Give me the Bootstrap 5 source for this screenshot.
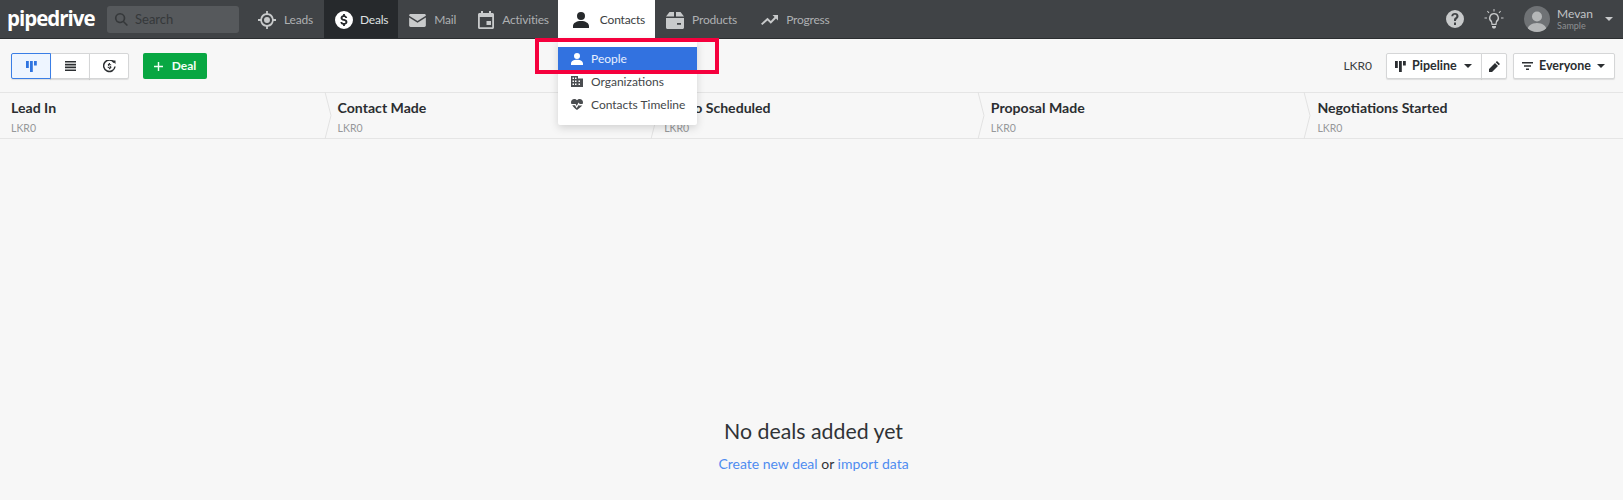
<!DOCTYPE html>
<html lang="en">
<head>
    <meta charset="UTF-8">
    <meta name="viewport" content="width=device-width, initial-scale=1.0">
    <title>Pipedrive - Deals</title>
    <link href="https://cdn.jsdelivr.net/npm/bootstrap@5.3.0/dist/css/bootstrap.min.css" rel="stylesheet">
    <style>
        html, body { height: 500px; overflow: hidden; }
        body { background: #f7f7f7; color: #26292c; font-family: "Lato", "Liberation Sans", sans-serif; font-size: 14px; }
        svg { display: block; fill: currentColor; flex: none; }

        .pd-top { height: 39px; background: #404346; border-bottom: 1px solid #2b2e30; padding: 0; color: #c2c4c6; flex-wrap: nowrap; justify-content: flex-start; }
        .pd-logo { width: 107px; padding-left: 7px; color: #fff; font-family: "Open Sans", sans-serif; font-weight: 700; font-size: 20.5px; letter-spacing: -1px; line-height: 38px; margin-top: -2px; }
        .pd-search { width: 132px; height: 27px; background: #56595c; border-radius: 3px; color: #35383a; padding: 1px 0 0 7px; gap: 6px; font-size: 13px; margin-right: 8px; }
        .pd-link { height: 38px; padding: 2px 11px 0; gap: 8px; color: #aeb0b2; font-size: 12px; letter-spacing: -.2px; text-decoration: none; }
        .pd-link svg { color: #c8cacb; }
        .pd-link:hover { color: #fff; }
        .pd-link.is-deals { background: #26292c; color: #dfe0e1; padding-right: 10px; gap: 7px; }
        .pd-link.is-deals svg { color: #fff; }
        .pd-link.is-activities { padding-right: 9px; }
        .pd-link.is-open { background: #fff; color: #3b3e41; height: 39px; padding: 2px 10px 0 15px; gap: 11px; }
        .pd-link.is-open svg { color: #26292c; }
        .pd-link.is-products { padding-right: 13px; }
        .pd-right { gap: 20px; margin-left: auto; color: #c8cacb; }
        .pd-user { line-height: 1.15; font-size: 12px; margin-left: -13px; color: #c2c4c6; }
        .pd-user small { display: block; font-size: 9px; color: #8e9092; }
        .pd-avatar { width: 26px; height: 26px; border-radius: 50%; overflow: hidden; background: #6f7275; color: #b5b7b8; }
        .pd-caret { width: 0; height: 0; border: 4.500px solid transparent; border-top-color: currentColor; border-bottom: 0; }
        .pd-right .pd-caret { margin: 0 10px 0 -8px; }

        .pd-bar { height: 53px; padding: 14px 8px 13px 11px; }
        .pd-btn { height: 26px; padding: 0 8px; background: #fff; border: 1px solid #d5d6d7; border-radius: 2px; box-shadow: 0 1px 1px rgba(0,0,0,.1); color: #2b2e31; font-weight: 700; font-size: 12.5px; gap: 6px; --bs-btn-hover-bg: #fff; --bs-btn-hover-border-color: #d5d6d7; }
        .pd-view { width: 40px; padding: 0; justify-content: center; }
        .pd-view.is-on { background: #eef5ff; border-color: #3a7ee6; color: #2f74e0; position: relative; z-index: 1; }
        .pd-add { height: 26px; width: 64px; margin-left: 14px; padding: 0; background: #08a742; border: 0; border-radius: 2px; color: #f2fff6; font-size: 12px; font-weight: 700; gap: 9px; --bs-btn-hover-bg: #08a742; --bs-btn-hover-color: #fff; }
        .pd-total { font-size: 12px; color: #3b3e41; margin-right: 14px; }
        .pd-pipe { width: 96px; }
        .pd-edit { width: 26px; justify-content: center; padding: 0; }
        .pd-everyone { width: 102px; margin-left: 6px; }
        .pd-btn .pd-caret { margin-left: auto; margin-right: 1px; }

        .pd-stages { height: 47px; border-top: 1px solid #e5e5e5; border-bottom: 1px solid #e5e5e5; }
        .pd-stage { width: 326.6px; padding: 5px 0 0 11px; position: relative; flex: none; }
        .pd-stage:last-child { flex: 1 1 auto; width: auto; }
        .pd-stage h6 { font-size: 14.100px; font-weight: 700; line-height: 20px; margin: 0 0 3px; color: #2b2e31; }
        .pd-stage span { font-size: 10.500px; color: #96989a; display: block; line-height: 14px; }
        .pd-chev { position: absolute; top: -1px; right: -5px; color: #e2e2e2; fill: none; }

        .pd-empty { flex: 1 1 auto; padding: 0 0 26px 4px; }
        .pd-empty h4 { font-size: 21.300px; font-weight: 400; margin: 0 0 8px; line-height: 30px; color: #303336; }
        .pd-empty p { margin: 0; font-size: 14px; line-height: 20px; color: #303336; }
        .pd-empty a { color: #4f8cf0; text-decoration: none; }

        .pd-menu { display: block; left: 558px; top: 39px; width: 139px; min-width: 0; margin: 0; padding: 8px 0 5px; height: 86px; border: 0; border-radius: 0 0 2px 2px; box-shadow: 0 3px 8px rgba(0,0,0,.15); font-size: 12px; }
        .pd-menu .dropdown-item { height: 23px; padding: 0 0 0 13px; gap: 8px; color: #44474a; }
        .pd-menu .dropdown-item svg { color: #4a4d50; }
        .pd-menu .dropdown-item.active { background: #3272e0; color: #e8f0ff; }
        .pd-menu .dropdown-item.active svg { color: #fff; }
        .pd-mark { position: absolute; left: 535px; top: 38px; width: 184px; height: 36px; border: 4px solid #f5003d; pointer-events: none; z-index: 1100; }
    </style>
</head>
<body class="d-flex flex-column">

<nav class="navbar pd-top">
    <div class="pd-logo">pipedrive</div>
    <div class="pd-search d-flex align-items-center">
        <svg width="15" height="15" viewBox="0 0 16 16"><path d="M6.500 1a5.500 5.500 0 0 1 4.400 8.800l4 4-1.200 1.200-4-4A5.500 5.500 0 1 1 6.500 1zm0 1.700a3.800 3.800 0 1 0 0 7.600 3.800 3.800 0 0 0 0-7.600z"/></svg>
        Search
    </div>
    <a href="#" class="pd-link d-flex align-items-center">
        <svg width="18" height="18" viewBox="0 0 20 20"><path d="M9 0h2v2.600a7.500 7.500 0 0 1 6.400 6.400H20v2h-2.600a7.500 7.500 0 0 1-6.400 6.400V20H9v-2.600A7.500 7.500 0 0 1 2.600 11H0V9h2.600A7.500 7.500 0 0 1 9 2.600V0zm1 4.400a5.600 5.600 0 1 0 0 11.200 5.600 5.600 0 0 0 0-11.200zM10 6.700a3.300 3.300 0 1 1 0 6.600 3.300 3.300 0 0 1 0-6.600z"/></svg>
        Leads
    </a>
    <a href="#" class="pd-link is-deals d-flex align-items-center">
        <svg width="18" height="18" viewBox="0 0 18 18"><path fill-rule="evenodd" d="M9 0a9 9 0 1 1 0 18A9 9 0 0 1 9 0zm-.9 3v1.300C6.600 4.600 5.600 5.600 5.600 7c0 1.700 1.300 2.300 3 2.800 1.400.4 1.900.7 1.900 1.300 0 .6-.6 1-1.500 1-1 0-1.600-.4-1.700-1.200H5.400c.1 1.600 1.200 2.500 2.700 2.800V15h1.800v-1.300c1.500-.3 2.500-1.200 2.500-2.700 0-1.800-1.400-2.400-3-2.900-1.400-.4-1.900-.7-1.900-1.200 0-.5.5-.9 1.400-.9.900 0 1.400.4 1.500 1.100h1.800c-.1-1.400-1-2.400-2.300-2.700V3H8.100z"/></svg>
        Deals
    </a>
    <a href="#" class="pd-link d-flex align-items-center">
        <svg width="17" height="13" viewBox="0 0 18 14"><path d="M1.500 0h15c.8 0 1.500.7 1.500 1.500v.4L9 7.500 0 1.900v-.4C0 .7.700 0 1.500 0zM0 3.900l9 5.600 9-5.600v8.600c0 .8-.7 1.500-1.500 1.500h-15C.7 14 0 13.300 0 12.500V3.900z"/></svg>
        Mail
    </a>
    <a href="#" class="pd-link is-activities d-flex align-items-center">
        <svg width="16" height="18" viewBox="0 0 16 18"><path fill-rule="evenodd" d="M3 0h2v2h6V0h2v2h1.500C15.300 2 16 2.700 16 3.500v13c0 .8-.7 1.500-1.500 1.500h-13C.7 18 0 17.300 0 16.500v-13C0 2.700.7 2 1.500 2H3V0zM1.800 6v10.200h12.400V6H1.800zM8.500 10H13v4H8.500v-4z"/></svg>
        Activities
    </a>
    <a href="#" class="pd-link is-open d-flex align-items-center">
        <svg width="16" height="16" viewBox="0 0 16 16"><path d="M8 0a4 4 0 1 1 0 8 4 4 0 0 1 0-8zM0 14c0-3 3.500-5 8-5s8 2 8 5v2H0v-2z"/></svg>
        Contacts
    </a>
    <a href="#" class="pd-link is-products d-flex align-items-center">
        <svg width="18" height="17" viewBox="0 0 18 17"><path d="M3.500 0H8v4.500H0L3.500 0zM10 0h4.500L18 4.500h-8V0zM0 6h18v9.500c0 .8-.7 1.500-1.500 1.500h-15C.7 17 0 16.300 0 15.500V6zm11 5v1.800h4V11h-4z"/></svg>
        Products
    </a>
    <a href="#" class="pd-link d-flex align-items-center">
        <svg width="17" height="10" viewBox="0 0 17 10"><path d="M11.500 0H17v5.500l-2-2-5.200 5.200-3.300-3.300L1.300 10 0 8.700l6.500-6 3.300 3.300 3.800-3.900-2.100-2.100z"/></svg>
        Progress
    </a>
    <div class="pd-right d-flex align-items-center">
        <svg width="18" height="18" viewBox="0 0 18 18"><path fill-rule="evenodd" d="M9 0a9 9 0 1 1 0 18A9 9 0 0 1 9 0zM8 12.500V15h2v-2.500H8zM9 3C6.900 3 5.500 4.200 5.300 6.200h2c.1-.9.700-1.400 1.600-1.400.9 0 1.500.5 1.500 1.300 0 .7-.4 1-1.100 1.500C8.400 8.200 8 8.900 8 10.200v.8h2v-.6c0-.7.300-1 1-1.500.9-.7 1.500-1.400 1.500-2.800C12.500 4.200 11.100 3 9 3z"/></svg>
        <svg width="20" height="20" viewBox="0 0 20 20"><path d="M9.500 0h1v2.500h-1zM3 2.500l.7-.7 1.700 1.700-.7.7zM16.300 1.800l.7.7-1.700 1.700-.7-.7zM.5 8.500H3v1H.5zM17 8.500h2.500v1H17zM10 4a5 5 0 0 1 3 9l-.5 3h-5L7 13a5 5 0 0 1 3-9zm0 1.300a3.700 3.700 0 0 0-2 6.800l.6 2.600h2.800l.6-2.600a3.700 3.700 0 0 0-2-6.800zM8 17h4v1.200l-1 1.300H9l-1-1.300V17z"/></svg>
        <div class="pd-avatar">
            <svg width="26" height="26" viewBox="0 0 26 26"><circle cx="13" cy="10.500" r="5"/><path d="M3 26c0-6 4.500-9 10-9s10 3 10 9z"/></svg>
        </div>
        <div class="pd-user">Mevan<small>Sample</small></div>
        <div class="pd-caret"></div>
    </div>
</nav>

<div class="pd-bar d-flex align-items-center">
    <div class="btn-group">
        <button class="btn pd-btn pd-view is-on d-flex align-items-center">
            <svg width="11" height="11" viewBox="0 0 11 11"><path d="M0 0h2.800v7H0zM4 0h2.800v11H4zM8 0h2.800v4.500H8z"/></svg>
        </button>
        <button class="btn pd-btn pd-view d-flex align-items-center">
            <svg width="11" height="10" viewBox="0 0 11 10"><path d="M0 0h11v1.600H0zM0 2.800h11v1.600H0zM0 5.600h11v1.600H0zM0 8.400h11V10H0z"/></svg>
        </button>
        <button class="btn pd-btn pd-view d-flex align-items-center">
            <svg width="13" height="13" viewBox="0 0 13 13"><path fill="none" stroke="currentColor" stroke-width="1.500" d="M11 2.500A5.700 5.700 0 1 0 12 6.500"/><path d="M9 .5h3.500V4zM6 3h1v.9c.8.1 1.300.6 1.400 1.300H7.300c-.1-.3-.3-.5-.8-.5-.4 0-.7.200-.7.500 0 .3.300.4 1 .6 1 .3 1.600.6 1.600 1.500 0 .7-.5 1.200-1.400 1.400V9.200H6v-.9c-.9-.1-1.500-.7-1.500-1.500h1.100c.1.400.4.600.9.600.5 0 .8-.2.800-.6 0-.3-.3-.5-1-.6-1-.3-1.500-.7-1.500-1.500 0-.7.500-1.200 1.200-1.300V3z"/></svg>
        </button>
    </div>
    <button class="btn pd-add d-flex align-items-center justify-content-center">
        <svg width="9" height="9" viewBox="0 0 10 10"><path d="M4.200 0h1.600v4.200H10v1.600H5.800V10H4.200V5.800H0V4.200h4.200z"/></svg>
        Deal
    </button>
    <div class="ms-auto d-flex align-items-center">
        <span class="pd-total">LKR0</span>
        <div class="btn-group">
            <button class="btn pd-btn pd-pipe d-flex align-items-center">
                <svg width="11" height="11" viewBox="0 0 11 11"><path d="M0 0h2.800v7H0zM4 0h2.800v11H4zM8 0h2.800v4.500H8z"/></svg>
                Pipeline
                <span class="pd-caret"></span>
            </button>
            <button class="btn pd-btn pd-edit d-flex align-items-center">
                <svg width="11" height="11" viewBox="0 0 11 11"><path d="M8 0l3 3-1.300 1.300-3-3zM6 2l3 3-6 6H0V8z"/></svg>
            </button>
        </div>
        <button class="btn pd-btn pd-everyone d-flex align-items-center">
            <svg width="11" height="8" viewBox="0 0 11 8"><path d="M0 0h11v1.500H0zM2 3.200h7v1.500H2zM4 6.500h3V8H4z"/></svg>
            Everyone
            <span class="pd-caret"></span>
        </button>
    </div>
</div>

<div class="pd-stages d-flex">
    <div class="pd-stage"><h6>Lead In</h6><span>LKR0</span>
        <svg class="pd-chev" width="8" height="47" viewBox="0 0 8 47"><path stroke="currentColor" d="M1 0l6 23.500-6 23.500"/></svg></div>
    <div class="pd-stage"><h6>Contact Made</h6><span>LKR0</span>
        <svg class="pd-chev" width="8" height="47" viewBox="0 0 8 47"><path stroke="currentColor" d="M1 0l6 23.500-6 23.500"/></svg></div>
    <div class="pd-stage"><h6>Demo Scheduled</h6><span>LKR0</span>
        <svg class="pd-chev" width="8" height="47" viewBox="0 0 8 47"><path stroke="currentColor" d="M1 0l6 23.500-6 23.500"/></svg></div>
    <div class="pd-stage"><h6>Proposal Made</h6><span>LKR0</span>
        <svg class="pd-chev" width="8" height="47" viewBox="0 0 8 47"><path stroke="currentColor" d="M1 0l6 23.500-6 23.500"/></svg></div>
    <div class="pd-stage"><h6>Negotiations Started</h6><span>LKR0</span></div>
</div>

<div class="pd-empty d-flex flex-column justify-content-end align-items-center text-center">
    <h4>No deals added yet</h4>
    <p><a href="#">Create new deal</a> or <a href="#">import data</a></p>
</div>

<div class="dropdown-menu pd-menu show">
    <a class="dropdown-item active d-flex align-items-center" href="#">
        <svg width="12" height="12" viewBox="0 0 16 16"><path d="M8 0a4 4 0 1 1 0 8 4 4 0 0 1 0-8zM0 14c0-3 3.500-5 8-5s8 2 8 5v2H0v-2z"/></svg>
        People
    </a>
    <a class="dropdown-item d-flex align-items-center" href="#">
        <svg width="12" height="11" viewBox="0 0 12 11"><path fill-rule="evenodd" d="M0 0h7v2.500h5V11H0V0zm1.500 1.500v1.500H3V1.500H1.500zm2.500 0v1.500h1.500V1.500H4zM1.500 4.500V6H3V4.500H1.500zm2.500 0V6h1.500V4.500H4zm3.500 0V6h1.500V4.500H7.500zM1.500 7.500V9H3V7.500H1.500zm2.500 0V9h1.500V7.500H4zm3.500 0V9h1.500V7.500H7.500z"/></svg>
        Organizations
    </a>
    <a class="dropdown-item d-flex align-items-center" href="#">
        <svg width="12" height="11" viewBox="0 0 12 11"><path d="M3.300 0C4.300 0 5.300.5 6 1.300 6.700.5 7.700 0 8.700 0 10.600 0 12 1.400 12 3.300c0 .6-.1 1.100-.4 1.700H8.700L7.600 3.400 5.700 7 4.700 5H.4C.1 4.400 0 3.900 0 3.300 0 1.400 1.400 0 3.300 0zM1.200 6.200h2.800l1.700 3 1.900-3.300.5.700h3.200C9.900 8 8 9.500 6 11 4 9.500 2.300 8 1.200 6.200z"/></svg>
        Contacts Timeline
    </a>
</div>
<div class="pd-mark"></div>

<script src="https://cdn.jsdelivr.net/npm/bootstrap@5.3.0/dist/js/bootstrap.bundle.min.js"></script>
</body>
</html>
